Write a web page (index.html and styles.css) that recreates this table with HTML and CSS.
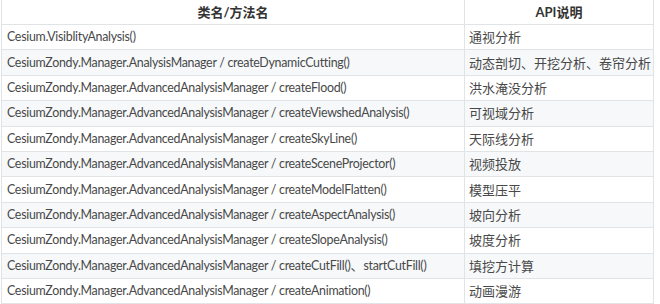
FILE: index.html
```html
<!DOCTYPE html>
<html lang="zh">
<head>
<meta charset="utf-8">
<link rel="stylesheet" href="styles.css">
</head>
<body>
<table class="api-table">
  <thead>
    <tr><th class="col-name">类名/方法名</th><th class="col-desc">API说明</th></tr>
  </thead>
  <tbody>
    <tr><td class="name">Cesium.VisiblityAnalysis()</td><td class="desc">通视分析</td></tr>
    <tr><td class="name">CesiumZondy.Manager.AnalysisManager / createDynamicCutting()</td><td class="desc">动态剖切、开挖分析、卷帘分析</td></tr>
    <tr><td class="name">CesiumZondy.Manager.AdvancedAnalysisManager / createFlood()</td><td class="desc">洪水淹没分析</td></tr>
    <tr><td class="name">CesiumZondy.Manager.AdvancedAnalysisManager / createViewshedAnalysis()</td><td class="desc">可视域分析</td></tr>
    <tr><td class="name">CesiumZondy.Manager.AdvancedAnalysisManager / createSkyLine()</td><td class="desc">天际线分析</td></tr>
    <tr><td class="name">CesiumZondy.Manager.AdvancedAnalysisManager / createSceneProjector()</td><td class="desc">视频投放</td></tr>
    <tr><td class="name">CesiumZondy.Manager.AdvancedAnalysisManager / createModelFlatten()</td><td class="desc">模型压平</td></tr>
    <tr><td class="name">CesiumZondy.Manager.AdvancedAnalysisManager / createAspectAnalysis()</td><td class="desc">坡向分析</td></tr>
    <tr><td class="name">CesiumZondy.Manager.AdvancedAnalysisManager / createSlopeAnalysis()</td><td class="desc">坡度分析</td></tr>
    <tr><td class="name">CesiumZondy.Manager.AdvancedAnalysisManager / createCutFill()<span class="cjk">、</span>startCutFill()</td><td class="desc">填挖方计算</td></tr>
    <tr><td class="name">CesiumZondy.Manager.AdvancedAnalysisManager / createAnimation()</td><td class="desc">动画漫游</td></tr>
  </tbody>
</table>
</body>
</html>
```
FILE: styles.css
```css
html, body {
  margin: 0;
  padding: 0;
  background: #ffffff;
}
body {
  font-family: "Lato", "Noto Sans CJK SC", sans-serif;
  font-size: 13px;
  color: #484848;
}
.api-table {
  border-collapse: collapse;
  margin: -1px 0 0 1px;
  width: 653px;
  table-layout: fixed;
}
.api-table th,
.api-table td {
  border: 1px solid #e1e4e7;
  padding: 0 5px;
  height: 25.4px;
  line-height: 16px;
  white-space: nowrap;
  text-align: left;
  box-sizing: border-box;
}
.api-table th {
  font-weight: bold;
  text-align: center;
  height: 25px;
  color: #333333;
}
.api-table td.name {
  font-size: 12.4px;
  letter-spacing: -0.28px;
}
.api-table td.desc {
  font-size: 13px;
  padding-left: 4px;
}
.cjk {
  font-size: 13px;
  letter-spacing: 0;
}
.col-name { width: 463px; }
.col-desc { width: 189px; }
.api-table tbody tr:nth-child(even) td {
  background: #f6f8fa;
}
```
